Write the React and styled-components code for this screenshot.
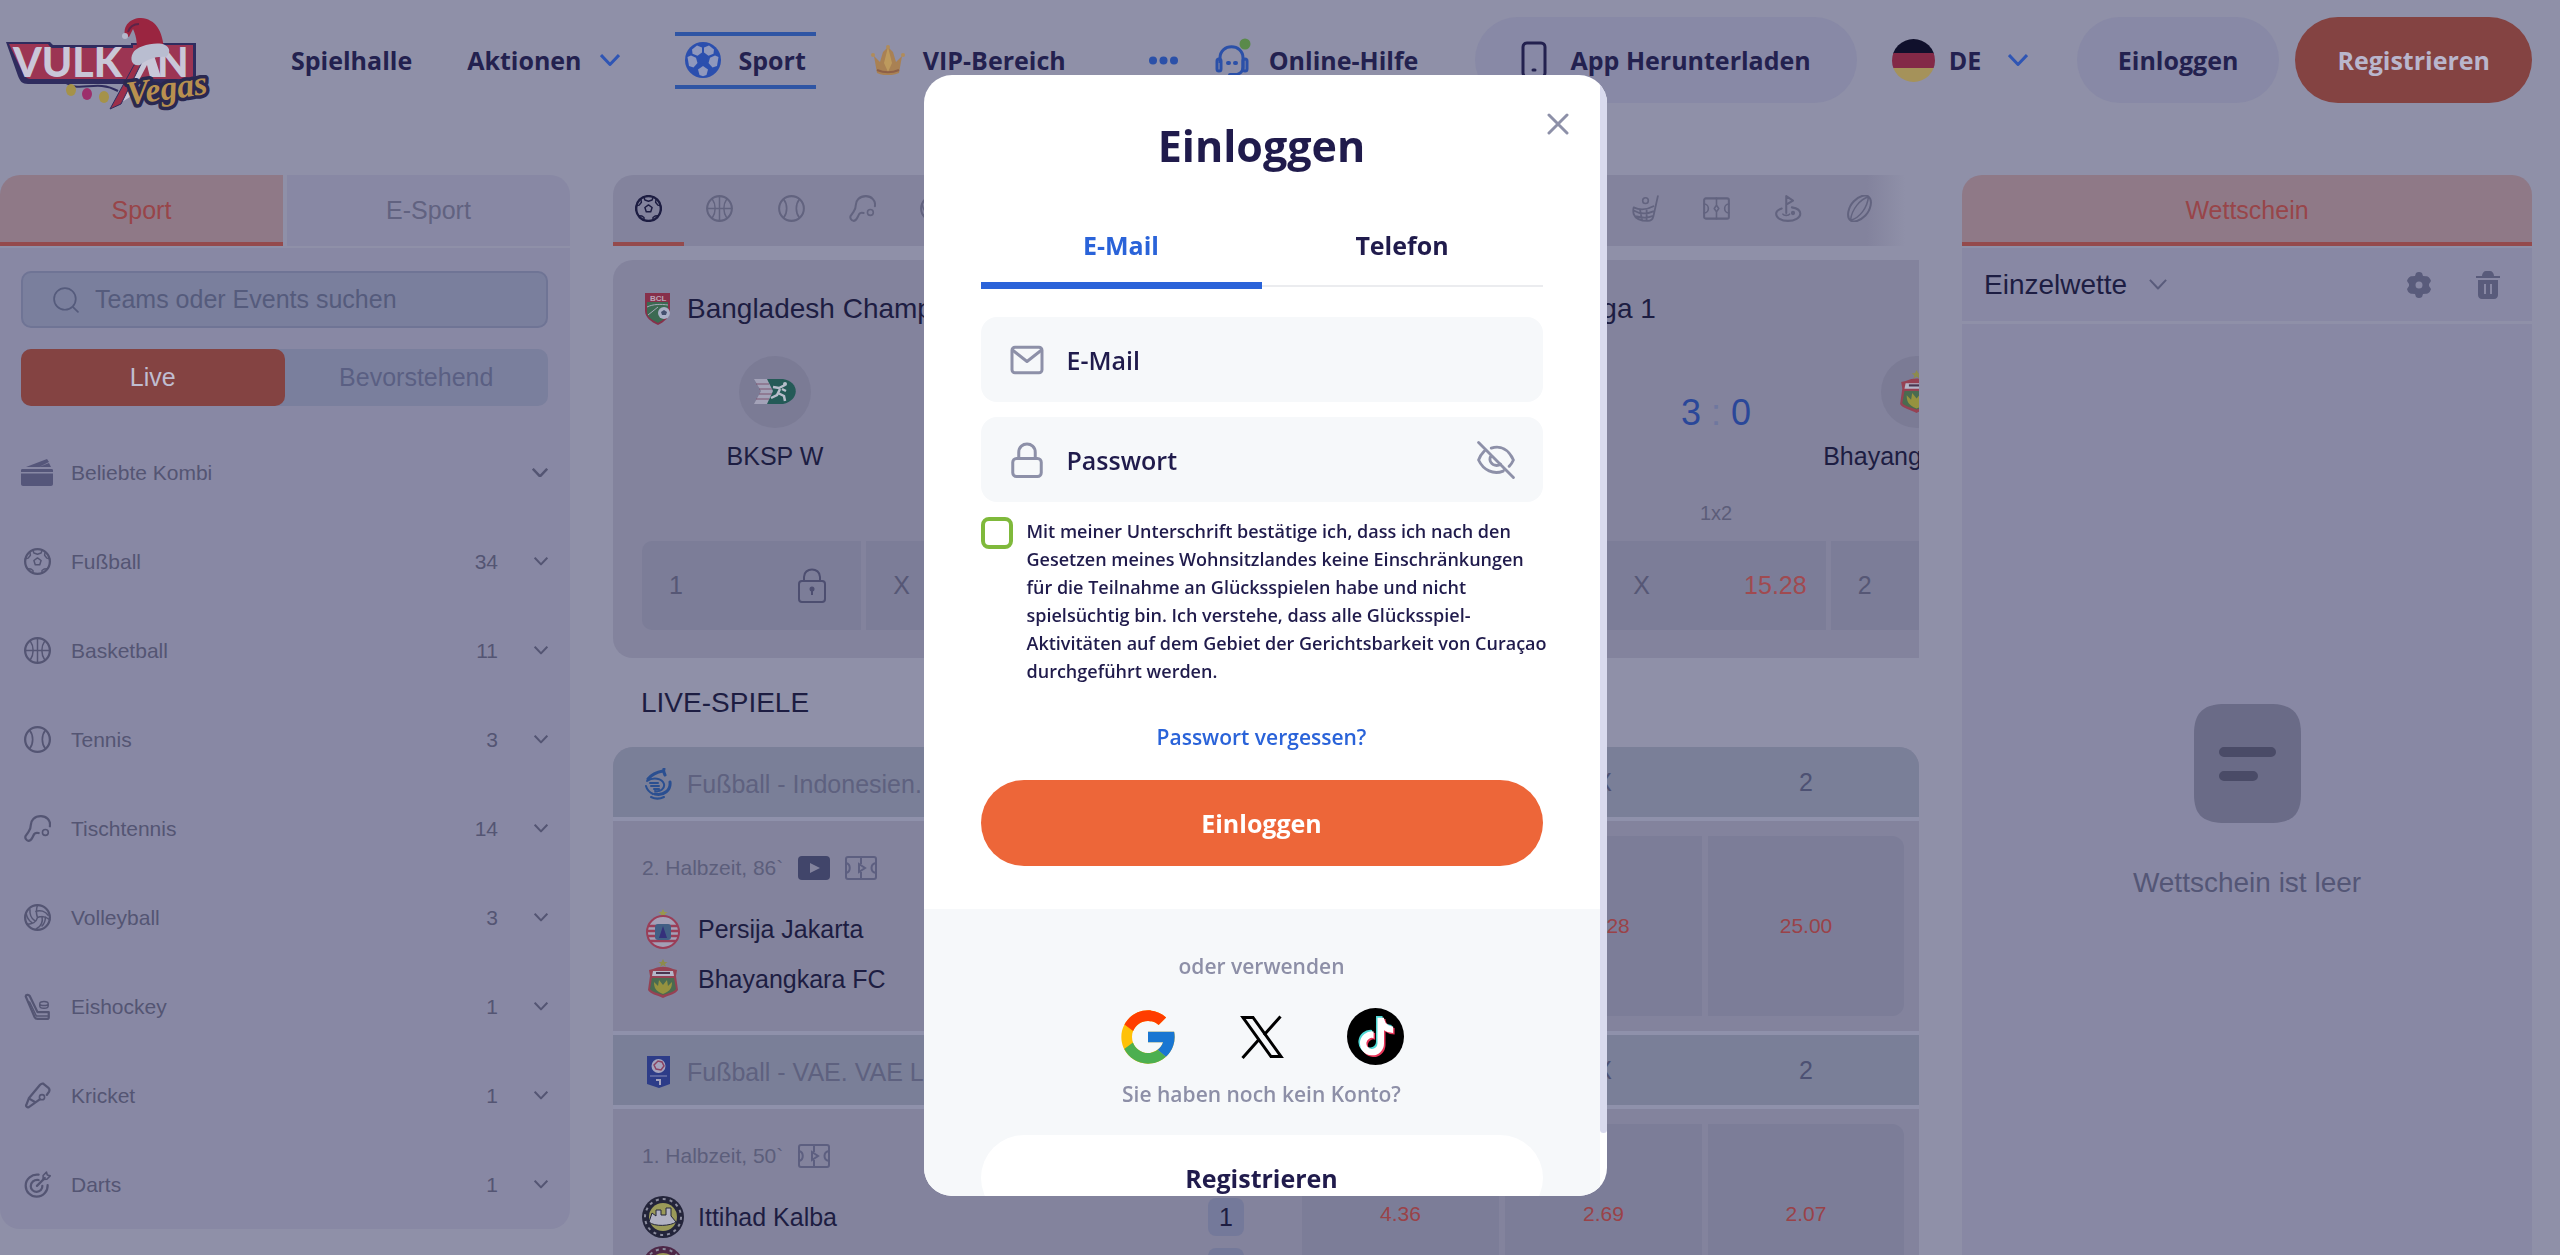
import React, { useState } from "react";
import styled, { createGlobalStyle } from "styled-components";
import { FcGoogle } from "react-icons/fc";
import { FaTiktok } from "react-icons/fa6";

const GlobalStyle = createGlobalStyle`
  * {
    box-sizing: border-box;
  }
  body {
    margin: 0;
    background: #8f90a8;
    color: #1d1d42;
    font-family: "Liberation Sans", Arial, sans-serif;
    font-size: 25px;
    overflow: hidden;
  }
  button, input, select {
    font: inherit;
    color: inherit;
    border: 0;
    margin: 0;
    padding: 0;
    background: none;
  }
  button {
    cursor: pointer;
  }
  a {
    color: inherit;
    text-decoration: none;
  }
  ul {
    list-style: none;
    margin: 0;
    padding: 0;
  }
  h1, h2, h3, p {
    margin: 0;
    font-weight: 400;
  }
  svg {
    display: block;
    flex: none;
  }
`;

const Page = styled.div`
  height: 100vh;
  overflow: hidden;
`;
const Header = styled.header`
  display: flex;
  align-items: center;
  height: 120px;
  padding-right: 28px;
  font-family: "Open Sans", "Noto Sans", sans-serif;
  font-weight: 700;
  font-size: 25px;
  color: #23214f;
  white-space: nowrap;
`;
const Nav = styled.nav`
  display: flex;
  align-items: center;
  gap: 55px;
  margin-left: 80px;
`;
const NavLink = styled.a`
  display: flex;
  align-items: center;
  gap: 18px;
  height: 57px;
  padding: ${(props) => (props.$active ? "0 10px" : "0")};
  border: solid ${(props) => (props.$active ? "#2f55a4" : "transparent")};
  border-width: 4px 0;
`;
const MoreButton = styled.button`
  display: flex;
  margin: 0 37px 0 83px;
`;
const HeaderActions = styled.div`
  display: flex;
  align-items: center;
  gap: 16px;
  margin-left: auto;
`;
const PillButton = styled.button`
  display: flex;
  align-items: center;
  justify-content: center;
  gap: 24px;
  height: 86px;
  padding: 0 ${(props) => props.$pad || 40}px;
  border-radius: 43px;
  background: ${(props) => (props.$primary ? "#844342" : "#8889a6")};
  color: ${(props) => (props.$primary ? "#b9b6cc" : "#23214f")};
`;
const Language = styled.div`
  display: flex;
  align-items: center;
  gap: 14px;
  margin: 0 33px 0 19px;
`;
const BareSelect = styled.select`
  appearance: none;
  cursor: pointer;
  margin-right: ${(props) => props.$gap}px;
`;

const Columns = styled.div`
  display: grid;
  grid-template-columns: 570px minmax(0, 1fr) 570px;
  gap: 43px;
  align-items: start;
  padding: 55px 28px 0 0;
`;
const TabRow = styled.div`
  display: flex;
  gap: 4px;
  margin-bottom: 2px;
  border-radius: 20px 20px 0 0;
  overflow: hidden;
`;
const PanelTab = styled.button`
  flex: 1;
  height: 71px;
  padding-top: 4px;
  background: ${(props) => (props.$active ? "#8f7987" : "#8888a4")};
  color: ${(props) => (props.$active ? "#984549" : "#616280")};
  border-bottom: 4px solid ${(props) => (props.$active ? "#944a4c" : "#8888a4")};
`;
const SidePanel = styled.div`
  padding: 23px 22px 0 21px;
  background: #8888a4;
  border-radius: 0 0 20px 20px;
`;
const SearchBox = styled.label`
  display: flex;
  align-items: center;
  gap: 16px;
  height: 57px;
  padding: 0 30px;
  background: #7a7f9d;
  border: 2px solid #6f7495;
  border-radius: 10px;
  color: #555b7c;
  input {
    flex: 1;
    min-width: 0;
    outline: none;
  }
  input::placeholder {
    color: #555b7c;
    opacity: 1;
  }
`;
const Switch = styled.div`
  display: flex;
  height: 57px;
  margin: 21px 0 22px;
  background: #7a7f9d;
  border-radius: 10px;
`;
const SwitchButton = styled.button`
  flex: 1;
  border-radius: 10px;
  background: ${(props) => (props.$active ? "#844342" : "transparent")};
  color: ${(props) => (props.$active ? "#c0bdd0" : "#5a5f83")};
`;
const SportItem = styled.button`
  display: flex;
  align-items: center;
  width: 100%;
  height: 89px;
  font-size: 21px;
  color: #545573;
  text-align: left;
`;
const SportIcon = styled.span`
  display: flex;
  justify-content: center;
  width: 32px;
  margin-right: 18px;
`;
const SportName = styled.span`
  flex: 1;
`;
const SportCount = styled.span`
  margin-right: 36px;
`;

const SportScroller = styled.div`
  display: flex;
  height: 71px;
  padding-right: 24px;
  border-radius: 20px 0 0 0;
  background: linear-gradient(90deg, #83839d calc(100% - 52px), #8f90a8 calc(100% - 14px));
  overflow: hidden;
`;
const ScrollerButton = styled.button`
  flex: 1;
  display: flex;
  align-items: center;
  justify-content: center;
  color: ${(props) => (props.$active ? "#1d1d42" : "#62637f")};
  border-bottom: 4px solid ${(props) => (props.$active ? "#944a4c" : "transparent")};
`;
const Cards = styled.div`
  display: flex;
  gap: 14px;
  margin-top: 14px;
  overflow: hidden;
`;
const Card = styled.article`
  flex: none;
  width: 726px;
  padding: 30px 29px 28px;
  background: #83839d;
  border-radius: 20px;
`;
const CardTitle = styled.h3`
  display: flex;
  align-items: center;
  gap: 15px;
  height: 38px;
  font-size: 28px;
`;
const Duel = styled.div`
  display: grid;
  grid-template-columns: 1fr 136px 1fr;
  align-items: center;
  margin-top: 28px;
  text-align: center;
  line-height: 28px;
`;
const Crest = styled.div`
  display: flex;
  align-items: center;
  justify-content: center;
  width: 72px;
  height: 72px;
  margin: 0 auto 14px;
  border-radius: 50%;
  background: #7b7b95;
`;
const Score = styled.div`
  display: flex;
  justify-content: center;
  gap: 10px;
  font-size: 36px;
  color: #2a4799;
  span {
    color: #6f779f;
  }
`;
const MarketName = styled.p`
  margin: 33px 0 18px;
  font-size: 20px;
  line-height: 20px;
  text-align: center;
  color: #5c5d79;
`;
const Market = styled.div`
  display: grid;
  grid-template-columns: repeat(3, 1fr);
  gap: 5px;
  border-radius: 10px;
  overflow: hidden;
`;
const MarketButton = styled.button`
  display: flex;
  align-items: center;
  justify-content: space-between;
  height: 89px;
  padding: 0 19px 0 27px;
  background: #7c7d98;
  color: #565775;
`;
const Odd = styled.span`
  display: flex;
  justify-content: center;
  min-width: 60px;
  color: #a04a50;
`;
const SectionTitle = styled.h2`
  padding: 0 28px;
  font-size: 28px;
  line-height: 89px;
`;
const Games = styled.table`
  width: 100%;
  table-layout: fixed;
  border-spacing: 0;
  border-radius: 20px 20px 0 0;
  overflow: hidden;
  background: #83839d;
  th, td {
    padding: 0 3px;
    border-bottom: 4px solid #8f91ab;
    vertical-align: top;
  }
  th {
    height: 74px;
    vertical-align: middle;
    background: #7a7f98;
    color: #4d5173;
    font-weight: 400;
  }
  td {
    height: 214px;
  }
  th:last-child, td:last-child {
    padding-right: 15px;
  }
`;
const League = styled.div`
  display: flex;
  align-items: center;
  gap: 15px;
  padding: 4px 0 0 26px;
  color: #5e617f;
`;
const GameInfo = styled.div`
  padding: 33px 52px 0 26px;
`;
const GameMeta = styled.div`
  display: flex;
  align-items: center;
  gap: 15px;
  height: 28px;
  margin-bottom: 22px;
  font-size: 21px;
  color: #5c5e7b;
`;
const TeamLine = styled.div`
  display: flex;
  align-items: center;
  gap: 14px;
  height: 50px;
`;
const TeamLogo = styled.span`
  display: flex;
  justify-content: center;
  width: 42px;
`;
const Goals = styled.span`
  width: 36px;
  margin-left: auto;
  line-height: 38px;
  text-align: center;
  background: #74799a;
  border-radius: 8px;
`;
const OddButton = styled.button`
  width: 100%;
  height: 180px;
  margin-top: 15px;
  font-size: 21px;
  color: #9a4248;
  background: #7c7d98;
  border-radius: ${(props) => (props.$last ? "0 12px 12px 0" : "0")};
`;

const SlipBar = styled.div`
  display: flex;
  align-items: center;
  height: 73px;
  padding: 0 32px 0 22px;
  background: #8888a4;
  font-size: 28px;
`;
const SlipTools = styled.div`
  display: flex;
  gap: 44px;
  margin-left: auto;
  color: #595b7b;
`;
const SlipBody = styled.div`
  display: flex;
  flex-direction: column;
  align-items: center;
  justify-content: center;
  gap: 44px;
  min-height: 955px;
  margin-top: 3px;
  background: #8888a4;
  font-size: 28px;
  color: #545676;
`;

const Backdrop = styled.div`
  position: fixed;
  inset: 0;
  display: flex;
  align-items: flex-start;
  justify-content: center;
  padding: 75px 30px 0 0;
`;
const Modal = styled.section`
  position: relative;
  width: 683px;
  height: calc(100vh - 134px);
  padding-right: 7px;
  border-radius: 28px;
  overflow: hidden;
  background: #fff;
  color: #201b4c;
  font-family: "Open Sans", "Noto Sans", sans-serif;
  font-weight: 600;
`;
const ScrollThumb = styled.div`
  position: absolute;
  top: 0;
  right: 0;
  width: 7px;
  height: calc(100% - 63px);
  border-radius: 0 0 4px 4px;
  background: #d9daee;
`;
const CloseButton = styled.button`
  position: absolute;
  top: 38px;
  right: 38px;
`;
const ModalMain = styled.div`
  padding: 42px 57px 43px;
`;
const ModalTitle = styled.h1`
  font-size: 43px;
  font-weight: 700;
  line-height: 58px;
  text-align: center;
`;
const ModalTabs = styled.div`
  display: flex;
  margin-top: 32px;
`;
const ModalTab = styled.button`
  position: relative;
  flex: 1;
  height: 80px;
  padding-bottom: 2px;
  font-weight: 700;
  color: ${(props) => (props.$active ? "#2a63d9" : "#201b4c")};
  border-bottom: 2px solid #ebecef;
  &::after {
    content: "";
    position: absolute;
    left: 0;
    right: 0;
    bottom: -4px;
    height: 7px;
    background: ${(props) => (props.$active ? "#2a63d9" : "transparent")};
  }
`;
const Field = styled.label`
  display: flex;
  align-items: center;
  gap: 22px;
  height: 85px;
  margin-top: ${(props) => props.$top}px;
  padding: 0 28px;
  border-radius: 16px;
  background: #f6f8fa;
  color: #8d90a8;
  input {
    flex: 1;
    min-width: 0;
    outline: none;
    color: #201b4c;
  }
  input::placeholder {
    color: #201b4c;
    opacity: 1;
  }
`;
const Consent = styled.div`
  display: flex;
  gap: 14px;
  margin: 15px -8px 0 0;
  input {
    flex: none;
    appearance: none;
    width: 32px;
    height: 32px;
    border: 4px solid #7fb93b;
    border-radius: 8px;
    background: #fff;
  }
  label {
    font-size: 18px;
    line-height: 28px;
  }
`;
const ForgotLink = styled.a`
  display: block;
  margin: 37px 0 28px;
  font-size: 21px;
  line-height: 30px;
  text-align: center;
  color: #2a63d9;
`;
const WideButton = styled.button`
  width: 100%;
  height: 86px;
  border-radius: 43px;
  font-weight: 700;
  background: ${(props) => (props.$primary ? "#ed6639" : "#fff")};
  color: ${(props) => (props.$primary ? "#fff" : "#201b4c")};
`;
const ModalFooter = styled.div`
  padding: 42px 57px;
  background: #f6f8fa;
  text-align: center;
  p {
    font-size: 21px;
    font-weight: 600;
    line-height: 30px;
    color: #8d8fa7;
  }
  p + button {
    margin-top: 26px;
  }
`;
const Socials = styled.div`
  display: flex;
  align-items: center;
  justify-content: center;
  gap: 56px;
  height: 57px;
  margin: 27px 0 14px;
  button {
    display: flex;
    justify-content: center;
    width: 58px;
  }
`;

const Stroke = ({ size = 27, width = 2, children, box = 24 }) => (
  <svg
    width={size}
    height={size}
    viewBox={`0 0 ${box} ${box}`}
    fill="none"
    stroke="currentColor"
    strokeWidth={width}
    strokeLinecap="round"
    strokeLinejoin="round"
  >
    {children}
  </svg>
);

const Chevron = ({ w = 14, color = "currentColor", stroke = 2 }) => (
  <svg width={w} height={w * 0.6} viewBox="0 0 20 12" fill="none" stroke={color} strokeWidth={stroke * (20 / w)}>
    <path d="M1 1l9 9.500l9-9.500" strokeLinejoin="round" />
  </svg>
);

const sportPaths = {
  football: (
    <>
      <circle cx="12" cy="12" r="11" />
      <g strokeWidth="1.300">
        <path d="M12 8.800l3.200 2.300l-1.200 3.800h-4l-1.200-3.800z" />
        <path d="M8 2.200l.8 2.300l3.200 1l3.200-1l.8-2.300M1.300 9.500l2.400-.5l2-2.600l-.4-2.400M22.700 9.500l-2.400-.5l-2-2.600l.4-2.400M3.500 18.500l2.700.2l1.800 1.300v2.300M20.500 18.500l-2.700.2l-1.800 1.300v2.300" />
      </g>
    </>
  ),
  basketball: (
    <>
      <circle cx="12" cy="12" r="11" />
      <g strokeWidth="1.300">
        <path d="M12 1v22M1 12h22M5.500 3.500c3.500 5 3.500 12 0 17M18.500 3.500c-3.500 5-3.500 12 0 17" />
      </g>
    </>
  ),
  tennis: (
    <>
      <circle cx="12" cy="12" r="11" />
      <path strokeWidth="1.500" d="M5 3.800c3.600 4.500 3.600 12 0 16.400M19 3.800c-3.600 4.500-3.600 12 0 16.400" />
    </>
  ),
  tabletennis: (
    <>
      <path d="M23 10c1-5-3-9-8-9c-6 0-9 4-9 8c0 2-.5 4-2 6l-2.500 3.500c-1 2 .5 4 2.500 4.500c1.500 0 2.500-1 3.500-3l1.500-3c1-1.500 2-1.500 4-1" />
      <circle cx="19" cy="15.500" r="2.600" strokeWidth="1.400" />
    </>
  ),
  volleyball: (
    <>
      <circle cx="12" cy="12" r="11" />
      <g strokeWidth="1.300">
        <path d="M12 12c-1.500-4-1-8 0-11M12 12c4-2 8-.5 11 2M12 12c-1 4-5 6-9 6M10.500 6.500c4-1.500 8.500 0 11 3.500M9.500 14.800c-3-2-4.500-6-4.200-9.800M16 11c1 5-1 9-5 11M19 11.500c0 3-1 6-3 8M7 16.500c-3-2-4.500-5-5-8" />
      </g>
    </>
  ),
  hockey: (
    <>
      <path d="M1.500 3c0-1.500 2.500-2 3.500-.5l7 14.500h10v4.500c0 .8-.5 1.500-1.500 1.500h-8.500c-1.500 0-2-.5-2.500-1.500z" />
      <path strokeWidth="1.300" d="M5 8l6 12.500h10M14 9.500c0-2.700 7.500-2.700 7.500 0v2c0 2.700-7.500 2.700-7.500 0zc0 2.200 7.500 2.200 7.500 0" />
    </>
  ),
  cricket: (
    <>
      <path d="M17 1.500l5 4c.8 1 .8 2 .3 3l-2 3M17 1.500c-1-.3-2 .3-2.700 1l-10 12l-2.300 6c-.5 1 1 2.500 2 2l10-7M5 15l5 3" />
      <circle cx="16" cy="13.500" r="2.300" strokeWidth="1.400" />
    </>
  ),
  darts: (
    <>
      <path d="M13 3.300c-6-.8-11.500 3.700-11.500 9.700c0 5.500 4.500 9.800 9.800 9.800c6 0 10-5 9.700-10.300M13 8c-4-.6-7 2-7 5.500c0 3 2.500 5 5.300 5c3 0 5.200-2.500 5-5.300M11.500 13.200l7-7" />
      <path strokeWidth="1.400" d="M17 7.500v-3.500l3-3l.7 2.600l2.600.7l-3 3z" />
    </>
  ),
  floorball: (
    <>
      <path strokeWidth="1.600" d="M23 1l-4 18c-.6 3-2 4-5 4c-7 0-11-2-12.500-6c-.5-2-.5-4 0-6c6 3 12 2 17.500-1M2 14c5 3 11 3 17 .5M4 19c5 1.500 10 1.500 15-.5M7 12.500l2 10M13 13v10" />
      <circle cx="12" cy="5" r="2.500" strokeWidth="1.400" />
    </>
  ),
  pitch: (
    <>
      <rect x="1" y="3" width="22" height="18" rx="1.500" />
      <path strokeWidth="1.400" d="M12 3v6M12 15v6M12 9l2 3l-2 3l-2-3zM1 8c5 0 5 8 0 8M23 8c-5 0-5 8 0 8" />
    </>
  ),
  golf: (
    <>
      <path d="M10 16v-15l6 4l-6 3.500M6 12c-3 1-5 2.600-5 4.700c0 3.500 4.500 6.300 10.500 6.300s11-2.800 11-6.300c0-3-3-5-7.500-5.700" />
      <path strokeWidth="1.400" d="M7 17c1 1.500 5 1.500 6 0" />
      <circle cx="16" cy="16" r="1" />
    </>
  ),
  rugby: (
    <>
      <path d="M20 1.500c4 3 2 12-3 17s-10 6-13 4c-4-3-2-12 3-17s10-6 13-4z" />
      <path strokeWidth="1.300" d="M20 1.500c-7 2-15 11-16 21M20 1.500c-1 10-8 19-16 21" />
    </>
  ),
};

const Sport = ({ name, size, width }) => (
  <Stroke size={size} width={width}>
    {sportPaths[name]}
  </Stroke>
);

const Logo = () => (
  <svg width="211" height="106" viewBox="0 0 211 106" role="img" aria-label="Vulkan Vegas">
    <path d="M6 35h44l3 3h78v-2h65v39l-34 2h-134c-6 0-8-3-10-8z" fill="#2f2c5e" />
    <path d="M9 37h39l3 4h82v-3h60v34h-161c-5 0-7-2-9-6z" fill="#9c3553" />
    <g fontFamily="Lato, sans-serif" fontWeight="900" fontSize="41" fill="#c9c7d8">
      <text x="13" y="70">VULK</text>
      <text x="157" y="70">N</text>
    </g>
    <path d="M138 45l14-3l9 28h-11l-3-12l-17 32l-16 10l22-38z" fill="#c9c7d8" />
    <path d="M134 58l8-3l-21 42l-11 5z" fill="#9c2f4a" stroke="#2f2c5e" strokeWidth="1" />
    <path d="M125 28c-2-9 5-17 16-17c14 1 22 12 23 33l-29 4c3-9 2-17-2-26l-4 8z" fill="#9a2540" />
    <path d="M128 25c2-6 6-8 11-8" fill="none" stroke="#5d2448" strokeWidth="2" />
    <path d="M133 46c3-7 24-12 32-8c6 3 5 9 1 12c-10-1-18 2-26 8c-7 2-11-5-7-12z" fill="#b9bdd0" />
    <circle cx="125" cy="29" r="3" fill="#b4b8cb" />
    <path d="M66 76c15 10 30-4 52 8" fill="none" stroke="#2f2c5e" strokeWidth="2" />
    <ellipse cx="71" cy="83" rx="5" ry="6" fill="#a59249" />
    <ellipse cx="87" cy="87" rx="5" ry="6" fill="#9c2f6b" />
    <ellipse cx="104" cy="90" rx="5" ry="6" fill="#a59249" />
    <text
      x="128"
      y="98"
      transform="rotate(-8 128 98)"
      fontFamily="Liberation Serif, serif"
      fontStyle="italic"
      fontWeight="700"
      fontSize="34"
      fill="#b8904f"
      stroke="#2a2850"
      strokeWidth="7"
      paintOrder="stroke"
      strokeLinejoin="round"
    >
      Vegas
    </text>
  </svg>
);

const BallIcon = () => (
  <svg width="36" height="36" viewBox="0 0 36 36">
    <circle cx="18" cy="18" r="18" fill="#2b4fae" />
    <g fill="#8f98bd">
      <path d="M12 3.500l5 2v5l-4.500 3.200l-5-2l-.5-4.200z" />
      <path d="M24 3.500l-5 2v5l4.500 3.200l5-2l.5-4.200z" />
      <path d="M2.500 15l3.500-1.500l5 2.200l1.500 5.300l-4 4.500l-4.500-1.500z" />
      <path d="M33.500 15l-3.500-1.500l-5 2.200l-1.500 5.300l4 4.500l4.500-1.500z" />
      <path d="M18 24l5 3.500l-1.500 5.500l-3.500 1.200l-3.500-1.200l-1.500-5.500z" />
    </g>
    <circle cx="18" cy="17.500" r="4" fill="#2b4fae" />
  </svg>
);

const Crown = () => (
  <svg width="34" height="30" viewBox="0 0 34 30">
    <path d="M3 11l6 6l3-10l5-5l5 5l3 10l6-6l-3 17c-7 3-16 3-22 0z" fill="#a98153" />
    <path d="M17 2l4 16l-4 9l-4-9z" fill="#bd9a5d" />
    <path d="M6 25c7 3 15 3 22 0" stroke="#8d5f47" strokeWidth="2" fill="none" />
    <circle cx="2" cy="10" r="2" fill="#b08c5a" />
    <circle cx="17" cy="2" r="2" fill="#b08c5a" />
    <circle cx="32" cy="10" r="2" fill="#b08c5a" />
  </svg>
);

const Headset = () => (
  <svg width="36" height="48" viewBox="0 0 36 48" fill="none" stroke="#2b50a8" strokeWidth="3">
    <path d="M5 27v-5c0-15 23-15 23 0v9c0 5-4 8-9 8" />
    <rect x="2" y="23" width="4" height="12" rx="2" />
    <rect x="28" y="23" width="4" height="12" rx="2" />
    <path d="M15 39h6M13 27h1M20 27h1" strokeWidth="4" strokeLinecap="round" />
    <circle cx="30" cy="8" r="5.500" fill="#5a8a4a" stroke="none" />
  </svg>
);

const Flag = () => (
  <svg width="43" height="43" viewBox="0 0 43 43">
    <clipPath id="flag">
      <circle cx="21.500" cy="21.500" r="21.500" />
    </clipPath>
    <g clipPath="url(#flag)">
      <path fill="#10102c" d="M0 0h43v15h-43z" />
      <path fill="#832947" d="M0 14h43v15h-43z" />
      <path fill="#a5925a" d="M0 29h43v14h-43z" />
    </g>
  </svg>
);

const CardLock = () => (
  <svg width="28" height="36" viewBox="0 0 28 36" fill="none" stroke="#4d4e70" strokeWidth="2">
    <rect x="1" y="13" width="26" height="21" rx="3" />
    <path d="M6 13v-4c0-10 16-10 16 0v4" />
    <circle cx="14" cy="21" r="2.500" fill="#4d4e70" stroke="none" />
    <path d="M14 21v6" />
  </svg>
);

const PitchIcon = () => (
  <svg width="32" height="24" viewBox="0 0 32 24" fill="none" stroke="#5d5f80" strokeWidth="2">
    <rect x="1" y="1" width="30" height="22" rx="2" />
    <path d="M16 1v7M16 16v7M14 8l6 4l-6 4zM1 7c5 1 5 9 0 10M31 7c-6 1-6 9 0 10" />
  </svg>
);

const VideoIcon = () => (
  <svg width="32" height="24" viewBox="0 0 32 24">
    <rect width="32" height="24" rx="4" fill="#41456a" />
    <path d="M12 7l10 5l-10 5z" fill="#83839d" />
  </svg>
);

const BclLogo = () => (
  <svg width="30" height="32" viewBox="0 0 30 32">
    <path d="M3 0h25v18c0 6-6 11-12 14c-7-3-13-8-13-14z" fill="#87304a" />
    <path d="M5 9h21v10c0 5-5 8-10 11c-6-3-11-6-11-11z" fill="#3b6a52" />
    <path d="M5 14c6-3 14-3 21-2M6 22l10-8" stroke="#a6a8b8" fill="none" />
    <text x="8" y="8" fontSize="8" fontWeight="700" fill="#b9a6b8">BCL</text>
    <circle cx="22" cy="20" r="6" fill="#aab0c6" />
    <path d="M22 17l3 2l-1 3h-4l-1-3z" fill="#44506f" />
  </svg>
);

const WaveLogo = () => (
  <svg width="30" height="32" viewBox="0 0 30 32" fill="none" stroke="#2a4f91" strokeLinecap="round">
    <path strokeWidth="3" d="M22 1c-1 2 0 4 1 6M21 3c-6 1-11 3-15 8M28 14c1 8-6 14-15 12" />
    <path strokeWidth="2" d="M5 13c6-4 15-3 17 3c1 5-4 8-9 7M4 18c1 4 3 6 7 8M8 15h8M9 18h8M12 21h5M9 29c4 2 9 2 13 0" />
  </svg>
);

const UaeLogo = () => (
  <svg width="30" height="32" viewBox="0 0 30 32">
    <path d="M5 0h23v28l-11 4l-12-4z" fill="#2d3c88" />
    <circle cx="16.500" cy="10" r="7" fill="#a5a3bd" />
    <path d="M12 9l4-4l4 1l2 4l-3 4l-5-1z" fill="none" stroke="#8a4262" strokeWidth="1.500" />
    <path d="M8 20h17" stroke="#6a72a8" strokeWidth="1.500" fill="none" />
    <path d="M14 24h4v5" stroke="#a5a3bd" strokeWidth="2" fill="none" />
  </svg>
);

const BkspLogo = () => (
  <svg width="44" height="26" viewBox="0 0 44 26">
    <path d="M8 0h22c17 3 17 21 0 25h-22z" fill="#245a57" />
    <path d="M1 0h13l6 12l-6 13h-13l7-13z" fill="#a3a2b8" />
    <path d="M3 5h13M6 10h13M6 15h13M3 20h13" stroke="#7d5470" />
    <path d="M32 6l-6 3l-6-1M27 10l-3 6l-6 3M25 14l6 3l1 5M29 10l4 2" stroke="#b7bdcb" strokeWidth="2.500" fill="none" />
    <circle cx="32" cy="5" r="2" fill="#b7bdcb" />
  </svg>
);

const PersijaLogo = () => (
  <svg width="34" height="40" viewBox="0 0 34 40">
    <path d="M17 0l1.500 3h3l-2.500 2l1 3l-3-2l-3 2l1-3l-2.500-2h3z" fill="#98984f" />
    <circle cx="17" cy="23" r="16" fill="#a39fb6" stroke="#9a3e58" strokeWidth="2" />
    <path d="M3 17h28M1 22h32M1 27h32M4 32h26" stroke="#9a3e58" strokeWidth="2.500" />
    <rect x="9" y="15" width="16" height="16" rx="3" fill="#425f85" />
    <path d="M17 17l4 12h-8z" fill="#35307b" />
  </svg>
);

const BhayangkaraLogo = ({ size = 40 }) => (
  <svg width={size * 0.8} height={size} viewBox="0 0 32 40">
    <path d="M16 0l1.500 3h3l-2.500 2l1 3l-3-2l-3 2l1-3l-2.500-2h3z" fill="#8d8b4c" />
    <path d="M6 10c7-3 13-3 20 0l4 1l-1 6l2 14c-2 4-9 5-15 8c-6-3-13-4-15-8l2-14l-1-6z" fill="#964153" />
    <path d="M6 12h20l1 5h-22z" fill="#b4b6c8" />
    <path d="M9 14h14" stroke="#4a3550" strokeWidth="2" />
    <path d="M5 19h22l2 11c-2 3-8 4-13 6c-5-2-11-3-13-6z" fill="#4a6b50" />
    <path d="M16 35c-8-3-9-7-9-12l4 4l1-6l4 5l4-5l1 6l4-4c0 5-1 9-9 12z" fill="#96923f" />
  </svg>
);

const KalbaLogo = ({ ring = "#23243a" }) => (
  <svg width="42" height="42" viewBox="0 0 42 42">
    <circle cx="21" cy="21" r="21" fill={ring} />
    <circle cx="21" cy="21" r="18" fill="none" stroke="#8a8b9d" strokeWidth="2" strokeDasharray="3 4" />
    <circle cx="21" cy="21" r="14" fill="#9a9a59" />
    <path d="M7 26l3-9l4 3v-6h5v5h5v-7h5v8l5 6c-5 4-22 5-27 0z" fill="#b0b1c3" stroke="#23243a" />
  </svg>
);

const WalletIcon = () => (
  <svg width="32" height="27" viewBox="0 0 32 27" fill="#55567a">
    <path d="M5 8l21-8l2 3l-10 5zM18 8l10-4l2 4z" />
    <path d="M0 11c0-1 1-1 2-1h28c1 0 2 0 2 1v2h-32zM0 14.500h32v10.500c0 1-1 2-2 2h-28c-1 0-2-1-2-2z" />
  </svg>
);

const GearIcon = () => (
  <svg width="26" height="26" viewBox="0 0 26 26">
    <path
      fillRule="evenodd"
      fill="currentColor"
      d="M10 1c1.500-1.300 4.500-1.300 6 0l1 3l3 .2c3 0 4.500 2.800 5 4.800l-2 3v2l2 3c-.5 2-2 4.800-5 4.800l-3 .2l-1 3c-1.500 1.300-4.500 1.300-6 0l-1-3l-3-.2c-3 0-4.500-2.800-5-4.800l2-3v-2l-2-3c.5-2 2-4.800 5-4.800l3-.2zM13 9.500a3.500 3.500 0 1 0 0 7a3.500 3.500 0 1 0 0-7z"
    />
  </svg>
);

const TrashIcon = () => (
  <svg width="24" height="28" viewBox="0 0 24 28" fill="currentColor">
    <path d="M0 5h6c0-3 2-5 4-5h4c2 0 4 2 4 5h6v2h-24z" />
    <path
      fillRule="evenodd"
      d="M2 9h20v15c0 2-1.500 4-4 4h-12c-2.500 0-4-2-4-4zM8 13v10h2v-10zM14 13v10h2v-10z"
    />
  </svg>
);

const EmptySlip = () => (
  <svg width="107" height="119" viewBox="0 0 107 119">
    <path d="M0 30c0-20 8-29 28-30h51c20 1 28 10 28 30v60c0 20-8 28-28 29h-51c-20-1-28-9-28-29z" fill="#6a6b87" />
    <path d="M30 48h47M30 72h29" stroke="#4a4b67" strokeWidth="10" strokeLinecap="round" />
  </svg>
);

const MailIcon = () => (
  <Stroke size={36} width={2}>
    <rect x="2" y="3.500" width="20" height="17" rx="2" />
    <path d="M2.500 5.500l9.500 7.500l9.500-7.500" />
  </Stroke>
);

const FieldLock = () => (
  <Stroke size={36} width={2}>
    <rect x="2.500" y="11" width="19" height="12" rx="2.500" />
    <path d="M6.500 11v-4c0-7.500 11-7.500 11 0v4" />
  </Stroke>
);

const EyeOff = () => (
  <Stroke size={38} width={1.8}>
    <path d="M1 1l22 22M9 4.500c6-2 11 1 14 7.500c-.7 1.600-1.600 3-2.700 4M4.500 6.500c-1.500 1.500-2.700 3.300-3.500 5.500c3 6.500 9.500 9.500 15.500 7M9 9c-2 3 0 6.500 3.500 6.500c1 0 1.700-.3 2.500-.8" />
  </Stroke>
);

const XIcon = () => (
  <svg width="44" height="44" viewBox="0 0 44 44" fill="none" stroke="#000" strokeWidth="3">
    <path d="M3 2.500h10l28 39h-10z" />
    <path d="M40.500 1.500l-16.500 18.500M18.500 25l-16 18" />
  </svg>
);

const TiktokIcon = () => (
  <svg width="57" height="57" viewBox="0 0 57 57">
    <circle cx="28.500" cy="28.500" r="28.500" fill="#000" />
    <FaTiktok x="9" y="8" size={38} color="#4fd8d5" />
    <FaTiktok x="12" y="11" size={38} color="#e8365a" />
    <FaTiktok x="10.500" y="9.500" size={38} color="#fff" />
  </svg>
);

const sports = [
  { name: "Fußball", icon: "football", count: 34 },
  { name: "Basketball", icon: "basketball", count: 11 },
  { name: "Tennis", icon: "tennis", count: 3 },
  { name: "Tischtennis", icon: "tabletennis", count: 14 },
  { name: "Volleyball", icon: "volleyball", count: 3 },
  { name: "Eishockey", icon: "hockey", count: 1 },
  { name: "Kricket", icon: "cricket", count: 1 },
  { name: "Darts", icon: "darts", count: 1 },
];

const scrollerSports = [
  "football",
  "basketball",
  "tennis",
  "tabletennis",
  "volleyball",
  "hockey",
  "cricket",
  "darts",
  "football",
  "basketball",
  "tennis",
  "tabletennis",
  "volleyball",
  "hockey",
  "floorball",
  "pitch",
  "golf",
  "rugby",
];

const cards = [
  {
    title: "Bangladesh Championship",
    logo: <BclLogo />,
    home: { name: "BKSP W", logo: <BkspLogo /> },
    away: { name: "Dhaka", logo: <BkspLogo /> },
    score: [0, 0],
    odds: [null, null, null],
  },
  {
    title: "Indonesien. Liga 1",
    logo: <WaveLogo />,
    home: { name: "Persija Jakarta", logo: <PersijaLogo /> },
    away: { name: "Bhayangkara FC", logo: <BhayangkaraLogo size={44} /> },
    score: [3, 0],
    odds: ["1.01", "15.28", "25.00"],
  },
];

const leagues = [
  {
    title: "Fußball - Indonesien. Liga 1",
    logo: <WaveLogo />,
    meta: "2. Halbzeit, 86`",
    video: true,
    teams: [
      { name: "Persija Jakarta", logo: <PersijaLogo />, goals: 3 },
      { name: "Bhayangkara FC", logo: <BhayangkaraLogo />, goals: 0 },
    ],
    odds: ["1.01", "15.28", "25.00"],
  },
  {
    title: "Fußball - VAE. VAE League",
    logo: <UaeLogo />,
    meta: "1. Halbzeit, 50`",
    teams: [
      { name: "Ittihad Kalba", logo: <KalbaLogo />, goals: 1 },
      { name: "Al Wahda", logo: <KalbaLogo ring="#4d2747" />, goals: 0 },
    ],
    odds: ["4.36", "2.69", "2.07"],
  },
];

const TopBar = () => (
  <Header>
    <a href="#home">
      <Logo />
    </a>
    <Nav>
      <NavLink href="#games">Spielhalle</NavLink>
      <NavLink href="#promo">
        Aktionen
        <Chevron w={20} color="#2f55b4" stroke={3} />
      </NavLink>
      <NavLink href="#sport" $active>
        <BallIcon />
        Sport
      </NavLink>
      <NavLink href="#vip">
        <Crown />
        VIP-Bereich
      </NavLink>
    </Nav>
    <MoreButton aria-label="Mehr">
      <svg width="29" height="9" viewBox="0 0 29 9" fill="#2b50a8">
        <circle cx="4" cy="4.500" r="4" />
        <circle cx="14.500" cy="4.500" r="4" />
        <circle cx="25" cy="4.500" r="4" />
      </svg>
    </MoreButton>
    <NavLink href="#help">
      <Headset />
      Online-Hilfe
    </NavLink>
    <HeaderActions>
      <PillButton $pad={46}>
        <svg width="26" height="38" viewBox="0 0 26 38" fill="none" stroke="#23214f" strokeWidth="3">
          <rect x="2" y="2" width="22" height="34" rx="4" />
          <path d="M12 29h2" strokeLinecap="round" />
        </svg>
        App Herunterladen
      </PillButton>
      <Language>
        <Flag />
        <BareSelect aria-label="Sprache" $gap={12}>
          <option>DE</option>
        </BareSelect>
        <Chevron w={20} color="#2f55b4" stroke={3} />
      </Language>
      <PillButton $pad={41}>Einloggen</PillButton>
      <PillButton $primary $pad={42}>
        Registrieren
      </PillButton>
    </HeaderActions>
  </Header>
);

const Sidebar = () => (
  <aside>
    <TabRow>
      <PanelTab $active>Sport</PanelTab>
      <PanelTab>E-Sport</PanelTab>
    </TabRow>
    <SidePanel>
      <SearchBox>
        <Stroke size={26} width={1.6}>
          <circle cx="11" cy="11" r="10" />
          <path d="M18.500 18.500l4.500 4.500" />
        </Stroke>
        <input type="search" aria-label="Teams oder Events suchen" placeholder="Teams oder Events suchen" />
      </SearchBox>
      <Switch>
        <SwitchButton $active>Live</SwitchButton>
        <SwitchButton>Bevorstehend</SwitchButton>
      </Switch>
      <ul>
        <li>
          <SportItem>
            <SportIcon>
              <WalletIcon />
            </SportIcon>
            <SportName>Beliebte Kombi</SportName>
            <Chevron w={16} stroke={2.5} />
          </SportItem>
        </li>
        {sports.map((sport) => (
          <li key={sport.name}>
            <SportItem>
              <SportIcon>
                <Sport name={sport.icon} size={27} width={2} />
              </SportIcon>
              <SportName>{sport.name}</SportName>
              <SportCount>{sport.count}</SportCount>
              <Chevron w={14} />
            </SportItem>
          </li>
        ))}
      </ul>
    </SidePanel>
  </aside>
);

const MatchCard = ({ card }) => (
  <Card>
    <CardTitle>
      {card.logo}
      {card.title}
    </CardTitle>
    <Duel>
      <div>
        <Crest>{card.home.logo}</Crest>
        {card.home.name}
      </div>
      <Score>
        {card.score[0]}
        <span>:</span>
        {card.score[1]}
      </Score>
      <div>
        <Crest>{card.away.logo}</Crest>
        {card.away.name}
      </div>
    </Duel>
    <MarketName>1x2</MarketName>
    <Market>
      {["1", "X", "2"].map((label, i) => (
        <MarketButton key={label}>
          {label}
          <Odd>{card.odds[i] || <CardLock />}</Odd>
        </MarketButton>
      ))}
    </Market>
  </Card>
);

const LeagueRows = ({ league }) => (
  <tbody>
    <tr>
      <th scope="colgroup">
        <League>
          {league.logo}
          {league.title}
        </League>
      </th>
      <th scope="col">1</th>
      <th scope="col">X</th>
      <th scope="col">2</th>
    </tr>
    <tr>
      <td>
        <GameInfo>
          <GameMeta>
            {league.meta}
            {league.video && <VideoIcon />}
            <PitchIcon />
          </GameMeta>
          {league.teams.map((team) => (
            <TeamLine key={team.name}>
              <TeamLogo>{team.logo}</TeamLogo>
              {team.name}
              <Goals>{team.goals}</Goals>
            </TeamLine>
          ))}
        </GameInfo>
      </td>
      {league.odds.map((odd, i) => (
        <td key={odd}>
          <OddButton $last={i === 2}>{odd}</OddButton>
        </td>
      ))}
    </tr>
  </tbody>
);

const BetSlip = () => (
  <aside>
    <TabRow>
      <PanelTab $active>Wettschein</PanelTab>
    </TabRow>
    <SlipBar>
      <BareSelect aria-label="Wettart" $gap={21}>
        <option>Einzelwette</option>
      </BareSelect>
      <Chevron w={18} color="#595b7b" />
      <SlipTools>
        <button aria-label="Einstellungen">
          <GearIcon />
        </button>
        <button aria-label="Leeren">
          <TrashIcon />
        </button>
      </SlipTools>
    </SlipBar>
    <SlipBody>
      <EmptySlip />
      <p>Wettschein ist leer</p>
    </SlipBody>
  </aside>
);

const LoginModal = () => {
  const [tab, setTab] = useState("mail");
  return (
    <Backdrop>
      <Modal role="dialog" aria-label="Einloggen">
        <ModalMain>
          <ModalTitle>Einloggen</ModalTitle>
          <ModalTabs>
            <ModalTab $active={tab === "mail"} onClick={() => setTab("mail")}>
              E-Mail
            </ModalTab>
            <ModalTab $active={tab === "phone"} onClick={() => setTab("phone")}>
              Telefon
            </ModalTab>
          </ModalTabs>
          <Field $top={30}>
            <MailIcon />
            <input type="email" aria-label="E-Mail" placeholder="E-Mail" />
          </Field>
          <Field $top={15}>
            <FieldLock />
            <input type="password" aria-label="Passwort" placeholder="Passwort" />
            <EyeOff />
          </Field>
          <Consent>
            <input type="checkbox" id="consent" />
            <label htmlFor="consent">
              Mit meiner Unterschrift bestätige ich, dass ich nach den Gesetzen meines Wohnsitzlandes keine
              Einschränkungen für die Teilnahme an Glücksspielen habe und nicht spielsüchtig bin. Ich verstehe, dass
              alle Glücksspiel-Aktivitäten auf dem Gebiet der Gerichtsbarkeit von Curaçao durchgeführt werden.
            </label>
          </Consent>
          <ForgotLink href="#reset">Passwort vergessen?</ForgotLink>
          <WideButton $primary>Einloggen</WideButton>
        </ModalMain>
        <ModalFooter>
          <p>oder verwenden</p>
          <Socials>
            <button aria-label="Google">
              <FcGoogle size={64} />
            </button>
            <button aria-label="X">
              <XIcon />
            </button>
            <button aria-label="TikTok">
              <TiktokIcon />
            </button>
          </Socials>
          <p>Sie haben noch kein Konto?</p>
          <WideButton>Registrieren</WideButton>
        </ModalFooter>
        <CloseButton aria-label="Schließen">
          <svg width="22" height="22" viewBox="0 0 22 22" stroke="#8d90a8" strokeWidth="3" strokeLinecap="round">
            <path d="M2 2l18 18M20 2l-18 18" />
          </svg>
        </CloseButton>
        <ScrollThumb />
      </Modal>
    </Backdrop>
  );
};

const App = () => {
  return (
    <>
      <GlobalStyle />
      <Page>
        <TopBar />
        <Columns>
          <Sidebar />
          <main>
            <SportScroller>
              {scrollerSports.map((sport, i) => (
                <ScrollerButton key={i} $active={i === 0} aria-label={sport}>
                  <Sport name={sport} size={27} width={i === 0 ? 2.2 : 1.8} />
                </ScrollerButton>
              ))}
            </SportScroller>
            <Cards>
              {cards.map((card) => (
                <MatchCard key={card.title} card={card} />
              ))}
            </Cards>
            <SectionTitle>LIVE-SPIELE</SectionTitle>
            <Games>
              <colgroup>
                <col />
                <col width="203" />
                <col width="203" />
                <col width="214" />
              </colgroup>
              {leagues.map((league) => (
                <LeagueRows key={league.title} league={league} />
              ))}
            </Games>
          </main>
          <BetSlip />
        </Columns>
      </Page>
      <LoginModal />
    </>
  );
};

export default App;
